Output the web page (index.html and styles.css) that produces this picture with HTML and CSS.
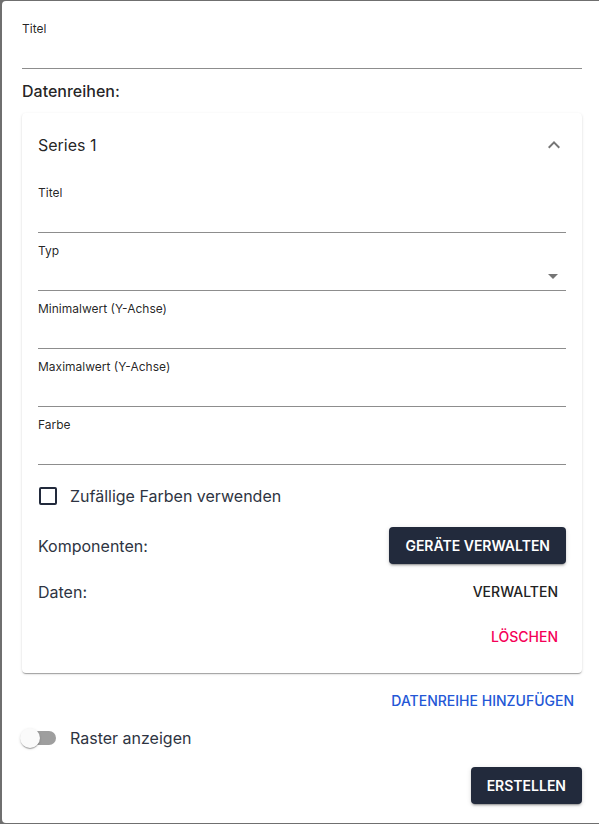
FILE: index.html
```html
<!DOCTYPE html>
<html lang="de">
<head>
<meta charset="utf-8">
<title>Diagramm erstellen</title>
<link rel="stylesheet" href="styles.css">
</head>
<body>
<div class="dialog">
  <div class="field">
    <label class="field-label">Titel</label>
    <div class="field-input"></div>
  </div>
  <div class="section-title">Datenreihen:</div>
  <div class="card">
    <div class="card-header">
      <span class="card-title">Series 1</span>
      <svg class="icon" viewBox="0 0 24 24" width="24" height="24"><path d="M12 8l-6 6 1.41 1.41L12 10.83l4.59 4.58L18 14z"/></svg>
    </div>
    <div class="fields">
      <div class="field">
        <label class="field-label">Titel</label>
        <div class="field-input"></div>
      </div>
      <div class="field">
        <label class="field-label">Typ</label>
        <div class="field-input select">
          <svg class="icon" viewBox="0 0 24 24" width="24" height="24"><path d="M7 10l5 5 5-5z"/></svg>
        </div>
      </div>
      <div class="field">
        <label class="field-label">Minimalwert (Y-Achse)</label>
        <div class="field-input"></div>
      </div>
      <div class="field">
        <label class="field-label">Maximalwert (Y-Achse)</label>
        <div class="field-input"></div>
      </div>
      <div class="field">
        <label class="field-label">Farbe</label>
        <div class="field-input"></div>
      </div>
    </div>
    <div class="check-row">
      <span class="checkbox"></span>
      <span class="check-label">Zufällige Farben verwenden</span>
    </div>
    <div class="action-row row-komp">
      <span class="row-label">Komponenten:</span>
      <button class="btn btn-dark">Geräte verwalten</button>
    </div>
    <div class="action-row row-daten">
      <span class="row-label">Daten:</span>
      <button class="btn btn-text">Verwalten</button>
    </div>
    <div class="action-row row-delete">
      <button class="btn btn-text btn-danger">Löschen</button>
    </div>
  </div>
  <div class="add-row">
    <button class="btn btn-text btn-primary">Datenreihe hinzufügen</button>
  </div>
  <div class="switch-row">
    <span class="switch"><span class="switch-track"></span><span class="switch-thumb"></span></span>
    <span class="switch-label">Raster anzeigen</span>
  </div>
  <div class="footer">
    <button class="btn btn-dark">Erstellen</button>
  </div>
</div>
</body>
</html>
```
FILE: styles.css
```css
html, body {
  margin: 0;
  padding: 0;
  overflow: hidden;
}
body {
  background: #6f6f6f;
  font-family: Inter, "Noto Sans", sans-serif;
  color: rgba(0, 0, 0, 0.87);
  height: 824px;
}
.dialog {
  box-sizing: border-box;
  width: 600px;
  height: 822px;
  margin: 1px 0 0 2px;
  padding: 19px 20px 20px;
  background: #fff;
  border-radius: 4px;
}
.field {
  display: flex;
  flex-direction: column;
}
.field-label {
  font-size: 12px;
  line-height: 17px;
  color: rgba(0, 0, 0, 0.87);
}
.field-input {
  height: 31px;
  border-bottom: 1px solid #8d8d8d;
}
.field-input.select {
  display: flex;
  align-items: center;
  justify-content: flex-end;
  padding-top: 3px;
  box-sizing: content-box;
  height: 28px;
}
.field-input.select .icon {
  margin-right: 1px;
}
.icon {
  fill: rgba(0, 0, 0, 0.54);
  display: block;
}
.section-title {
  margin-top: 10px;
  font-size: 16px;
  font-weight: 500;
  line-height: 24px;
  color: rgba(0, 0, 0, 0.87);
}
.card {
  margin-top: 10px;
  padding: 0 16px 18px;
  border-radius: 4px;
  background: #fff;
  box-shadow: 0 2px 1px -1px rgba(0, 0, 0, 0.2), 0 1px 1px 0 rgba(0, 0, 0, 0.14), 0 1px 3px 0 rgba(0, 0, 0, 0.12);
}
.card-header {
  height: 64px;
  display: flex;
  align-items: center;
  justify-content: space-between;
}
.card-title {
  font-size: 16px;
  line-height: 24px;
}
.fields {
  margin-top: 7px;
  display: flex;
  flex-direction: column;
  gap: 9px;
}
.check-row {
  margin-top: 10px;
  height: 42px;
  display: flex;
  align-items: center;
  gap: 13px;
}
.checkbox {
  box-sizing: border-box;
  width: 18px;
  height: 18px;
  margin-left: 1px;
  border: 2px solid #222a3c;
  border-radius: 2px;
}
.check-label, .row-label, .switch-label {
  font-size: 16px;
  line-height: 24px;
  color: #2e3442;
}
.action-row {
  display: flex;
  align-items: center;
  justify-content: space-between;
  margin-top: 10px;
}
.row-komp { height: 37px; }
.row-daten { height: 36px; }
.row-delete {
  margin-top: 9px;
  height: 36px;
  justify-content: flex-end;
}
.btn {
  font-family: Inter, "Noto Sans", sans-serif;
  font-size: 14px;
  line-height: 20px;
  text-transform: uppercase;
  letter-spacing: 0;
  border: none;
  background: none;
  cursor: pointer;
  border-radius: 4px;
}
.btn-dark {
  height: 37px;
  padding: 0 16px;
  background: #222a3c;
  color: #fff;
  font-weight: 600;
  box-shadow: 0 3px 1px -2px rgba(0, 0, 0, 0.2), 0 2px 2px 0 rgba(0, 0, 0, 0.14), 0 1px 5px 0 rgba(0, 0, 0, 0.12);
}
.btn-text {
  height: 36px;
  padding: 0 8px;
  color: #222;
  font-weight: 500;
}
.btn-danger {
  color: #f50057;
}
.btn-primary {
  color: #2457d6;
}
.add-row {
  margin-top: 10px;
  display: flex;
  justify-content: flex-end;
}
.switch-row {
  height: 38px;
  display: flex;
  align-items: center;
  gap: 12px;
  margin-left: -2px;
}
.switch {
  position: relative;
  width: 38px;
  height: 20px;
  flex: none;
}
.switch-track {
  position: absolute;
  left: 10px;
  top: 3px;
  width: 26px;
  height: 14px;
  border-radius: 7px;
  background: #9e9e9e;
}
.switch-thumb {
  position: absolute;
  left: 0;
  top: 0;
  width: 20px;
  height: 20px;
  border-radius: 50%;
  background: #fafafa;
  box-shadow: 0 2px 1px -1px rgba(0, 0, 0, 0.2), 0 1px 1px 0 rgba(0, 0, 0, 0.14), 0 1px 3px 0 rgba(0, 0, 0, 0.12);
}
.footer {
  margin-top: 10px;
  display: flex;
  justify-content: flex-end;
}
```
